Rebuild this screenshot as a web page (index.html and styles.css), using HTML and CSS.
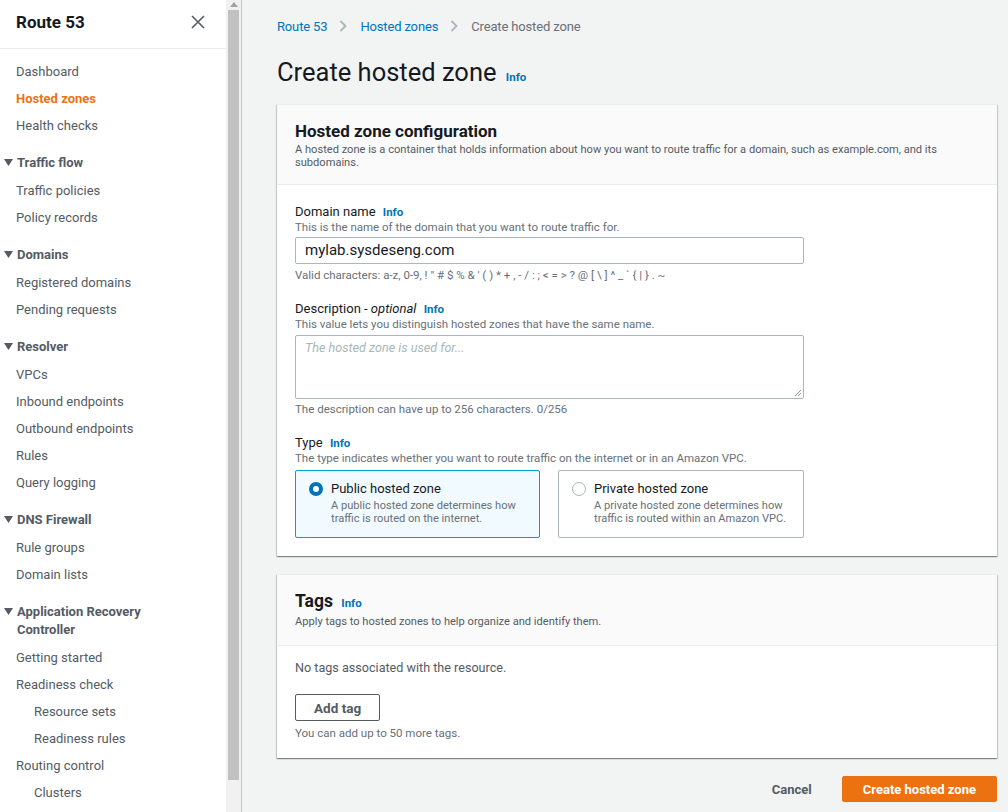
FILE: index.html
```html
<!DOCTYPE html>
<html lang="en">
<head>
<meta charset="utf-8">
<title>Create hosted zone</title>
<link rel="stylesheet" href="styles.css">
</head>
<body>
<div class="app">
  <aside class="sidebar">
    <div class="side-inner">
      <div class="side-head">
        <span class="side-title">Route 53</span>
        <svg class="close" width="14" height="14" viewBox="0 0 14 14"><path d="M1 1 L13 13 M13 1 L1 13" stroke="#545b64" stroke-width="1.6" fill="none"/></svg>
      </div>
      <nav class="nav">
        <ul class="nav-list">
          <li>Dashboard</li>
          <li class="active">Hosted zones</li>
          <li>Health checks</li>
        </ul>
        <div class="nav-section">
          <div class="section-head"><svg class="caret" width="9" height="7" viewBox="0 0 9 7"><path d="M0 0 H9 L4.5 7 Z" fill="#545b64"/></svg><span>Traffic flow</span></div>
          <ul class="nav-list">
            <li>Traffic policies</li>
            <li>Policy records</li>
          </ul>
        </div>
        <div class="nav-section">
          <div class="section-head"><svg class="caret" width="9" height="7" viewBox="0 0 9 7"><path d="M0 0 H9 L4.5 7 Z" fill="#545b64"/></svg><span>Domains</span></div>
          <ul class="nav-list">
            <li>Registered domains</li>
            <li>Pending requests</li>
          </ul>
        </div>
        <div class="nav-section">
          <div class="section-head"><svg class="caret" width="9" height="7" viewBox="0 0 9 7"><path d="M0 0 H9 L4.5 7 Z" fill="#545b64"/></svg><span>Resolver</span></div>
          <ul class="nav-list">
            <li>VPCs</li>
            <li>Inbound endpoints</li>
            <li>Outbound endpoints</li>
            <li>Rules</li>
            <li>Query logging</li>
          </ul>
        </div>
        <div class="nav-section">
          <div class="section-head"><svg class="caret" width="9" height="7" viewBox="0 0 9 7"><path d="M0 0 H9 L4.5 7 Z" fill="#545b64"/></svg><span>DNS Firewall</span></div>
          <ul class="nav-list">
            <li>Rule groups</li>
            <li>Domain lists</li>
          </ul>
        </div>
        <div class="nav-section">
          <div class="section-head"><svg class="caret" width="9" height="7" viewBox="0 0 9 7"><path d="M0 0 H9 L4.5 7 Z" fill="#545b64"/></svg><span>Application Recovery<br>Controller</span></div>
          <ul class="nav-list">
            <li>Getting started</li>
            <li>Readiness check</li>
            <li class="sub">Resource sets</li>
            <li class="sub">Readiness rules</li>
            <li>Routing control</li>
            <li class="sub">Clusters</li>
          </ul>
        </div>
      </nav>
    </div>
    <div class="scrollbar">
      <svg class="sb-arrow" width="8" height="5" viewBox="0 0 8 5"><path d="M0 5 L4 0 L8 5 Z" fill="#a3a3a3"/></svg>
      <div class="sb-thumb"></div>
    </div>
  </aside>

  <main class="main">
    <div class="breadcrumbs">
      <a class="crumb">Route 53</a>
      <svg class="chev" width="8" height="12" viewBox="0 0 8 12"><path d="M1.5 1 L6.5 6 L1.5 11" stroke="#aab7b8" stroke-width="1.8" fill="none"/></svg>
      <a class="crumb">Hosted zones</a>
      <svg class="chev" width="8" height="12" viewBox="0 0 8 12"><path d="M1.5 1 L6.5 6 L1.5 11" stroke="#aab7b8" stroke-width="1.8" fill="none"/></svg>
      <span class="crumb current">Create hosted zone</span>
    </div>

    <h1 class="page-title">Create hosted zone <a class="info">Info</a></h1>

    <section class="container">
      <div class="container-head">
        <h2 class="container-title">Hosted zone configuration</h2>
        <p class="container-desc">A hosted zone is a container that holds information about how you want to route traffic for a domain, such as example.com, and its subdomains.</p>
      </div>
      <div class="container-body">
        <div class="field">
          <div class="label">Domain name <a class="info">Info</a></div>
          <div class="hint">This is the name of the domain that you want to route traffic for.</div>
          <div class="input">mylab.sysdeseng.com</div>
          <div class="hint constraint first">Valid characters: a-z, 0-9, ! " # $ % &amp; ' ( ) * + , - / : ; &lt; = &gt; ? @ [ \ ] ^ _ ` { | } . ~</div>
        </div>

        <div class="field">
          <div class="label">Description - <i>optional</i> <a class="info">Info</a></div>
          <div class="hint">This value lets you distinguish hosted zones that have the same name.</div>
          <div class="textarea">
            <span class="placeholder">The hosted zone is used for...</span>
            <svg class="grip" width="8" height="8" viewBox="0 0 8 8"><path d="M7 1 L1 7 M7 4 L4 7" stroke="#879596" stroke-width="1" fill="none"/></svg>
          </div>
          <div class="hint constraint">The description can have up to 256 characters. 0/256</div>
        </div>

        <div class="field">
          <div class="label">Type <a class="info">Info</a></div>
          <div class="hint">The type indicates whether you want to route traffic on the internet or in an Amazon VPC.</div>
          <div class="tiles">
            <div class="tile selected">
              <span class="radio on"></span>
              <div class="tile-text">
                <div class="tile-title">Public hosted zone</div>
                <div class="tile-desc">A public hosted zone determines how traffic is routed on the internet.</div>
              </div>
            </div>
            <div class="tile">
              <span class="radio"></span>
              <div class="tile-text">
                <div class="tile-title">Private hosted zone</div>
                <div class="tile-desc">A private hosted zone determines how traffic is routed within an Amazon VPC.</div>
              </div>
            </div>
          </div>
        </div>
      </div>
    </section>

    <section class="container tags">
      <div class="container-head">
        <h2 class="container-title big">Tags <a class="info">Info</a></h2>
        <p class="container-desc">Apply tags to hosted zones to help organize and identify them.</p>
      </div>
      <div class="container-body">
        <p class="empty">No tags associated with the resource.</p>
        <button class="btn">Add tag</button>
        <div class="hint constraint">You can add up to 50 more tags.</div>
      </div>
    </section>

    <div class="actions">
      <button class="btn-link">Cancel</button>
      <button class="btn-primary">Create hosted zone</button>
    </div>
  </main>
</div>
</body>
</html>
```

FILE: styles.css
```css
* { box-sizing: border-box; }
html, body { margin: 0; padding: 0; }
body {
  font-family: Roboto, "Noto Sans", sans-serif;
  color: #16191f;
  background: #f2f3f3;
  width: 1008px;
  height: 812px;
  overflow: hidden;
}
ul { list-style: none; margin: 0; padding: 0; }
p, h1, h2 { margin: 0; }
a { cursor: pointer; }

.app { display: flex; height: 812px; }

/* Sidebar */
.sidebar {
  width: 242px;
  display: flex;
  background: #fff;
  border-right: 1px solid #c6c6c6;
  flex-shrink: 0;
}
.side-inner { width: 226px; overflow: hidden; }
.side-head {
  height: 49px;
  display: flex;
  align-items: center;
  justify-content: space-between;
  padding: 0 21px 4px 16px;
  border-bottom: 1px solid #eaeded;
}
.side-title { font-size: 17px; font-weight: 700; color: #16191f; }
.close { display: block; }

.nav { padding-top: 9px; }
.nav-list li {
  height: 27px;
  line-height: 27px;
  padding-left: 16px;
  font-size: 13px;
  color: #545b64;
  white-space: nowrap;
}
.nav-list li.active { color: #ec7211; font-weight: 700; }
.nav-list li.sub { padding-left: 34px; }
.nav-section { padding-top: 14.5px; }
.section-head {
  display: flex;
  align-items: flex-start;
  font-size: 13px;
  font-weight: 700;
  line-height: 18px;
  color: #545b64;
  margin-bottom: 5.5px;
}
.caret { margin: 5px 4px 0 4px; flex-shrink: 0; }

.scrollbar {
  width: 15px;
  background: #f1f1f1;
  display: flex;
  flex-direction: column;
  align-items: center;
}
.sb-arrow { margin-top: 2px; }
.sb-thumb {
  width: 11px;
  height: 770px;
  margin-top: 3px;
  background: #c1c1c1;
}

/* Main */
.main {
  flex: 1;
  padding: 16px 11px 0 35px;
  background: #f2f3f3;
}
.breadcrumbs {
  display: flex;
  align-items: center;
  height: 20px;
  font-size: 13px;
  letter-spacing: -0.15px;
}
.crumb { color: #0073bb; }
.crumb.current { color: #687078; }
.chev { margin: 0 13px 0 12px; }

.page-title {
  margin-top: 21px;
  height: 30px;
  line-height: 30px;
  font-size: 25.5px;
  font-weight: 400;
  color: #16191f;
}
.info {
  color: #0073bb;
  font-size: 11.5px;
  font-weight: 700;
  margin-left: 4px;
  line-height: 1;
  letter-spacing: 0;
}
.page-title .info { margin-left: 3px; }

.container {
  margin-top: 18px;
  background: #fff;
  border-top: 1px solid #eaeded;
  box-shadow: 0 1px 1px 0 rgba(0,28,36,.3), 1px 1px 1px 0 rgba(0,28,36,.15), -1px 1px 1px 0 rgba(0,28,36,.15);
}
.page-title + .container { margin-top: 17px; }
.container-head {
  background: #fafafa;
  border-bottom: 1px solid #eaeded;
  padding: 15px 20px 15px 18px;
}
.container-title {
  font-size: 17px;
  font-weight: 700;
  line-height: 22px;
  color: #16191f;
}
.container-title.big { font-size: 17.5px; line-height: 24px; }
.container-desc {
  font-size: 11.1px;
  line-height: 13px;
  color: #545b64;
  margin-top: 1px;
}
.container-body { padding: 18px 20px 18px 18px; }

.field { width: 509px; }
.field + .field { margin-top: 18px; }
.label {
  font-size: 13px;
  line-height: 18px;
  color: #16191f;
}
.hint {
  font-size: 11.5px;
  line-height: 13px;
  color: #687078;
}
.hint.constraint { margin-top: 4px; }
.hint.constraint.first { margin-top: 5px; }
.input {
  margin-top: 3px;
  height: 27px;
  border: 1px solid #aab7b8;
  border-radius: 2px;
  padding: 0 9px;
  line-height: 25px;
  font-size: 15px;
  color: #16191f;
}
.textarea {
  position: relative;
  margin-top: 4px;
  height: 64px;
  border: 1px solid #aab7b8;
  border-radius: 2px;
  padding: 3px 9px;
  font-size: 12.6px;
  line-height: 18px;
}
.placeholder { color: #aab7b8; font-style: italic; }
.grip { position: absolute; right: 1px; bottom: 1px; }

.tiles {
  margin-top: 5px;
  display: grid;
  grid-template-columns: 245px 246px;
  gap: 18px;
}
.tile {
  display: flex;
  align-items: flex-start;
  height: 68px;
  border: 1px solid #aab7b8;
  border-radius: 2px;
  padding: 9px 8px 0 13px;
}
.tile.selected { background: #f1faff; border-color: #00a1c9; }
.radio {
  width: 14px;
  height: 14px;
  border-radius: 50%;
  border: 1px solid #aab7b8;
  background: #fff;
  margin-top: 1.5px;
  margin-right: 8px;
  flex-shrink: 0;
}
.radio.on { border: 4px solid #0073bb; }
.tile-title { font-size: 13px; line-height: 18px; color: #16191f; }
.tile-desc { font-size: 11.1px; line-height: 13px; color: #687078; margin-top: 1px; }

.empty {
  font-size: 12.6px;
  line-height: 18px;
  color: #545b64;
}
.btn {
  margin-top: 17px;
  height: 27px;
  padding: 0 18px;
  background: #fff;
  border: 1px solid #545b64;
  border-radius: 2px;
  font-family: inherit;
  font-size: 13.5px;
  font-weight: 700;
  color: #545b64;
  display: block;
}
.tags .container-head { padding-top: 14px; padding-bottom: 17px; }
.tags .container-desc { margin-top: 2px; }
.tags .container-body { padding-top: 13px; }
.tags .hint.constraint { margin-top: 6px; }

.actions {
  margin-top: 18px;
  display: flex;
  justify-content: flex-end;
  gap: 9px;
}
.btn-link, .btn-primary {
  height: 26px;
  font-family: inherit;
  font-size: 13px;
  font-weight: 700;
  border-radius: 2px;
  padding: 0 20px;
  border: 1px solid transparent;
}
.btn-link { background: transparent; color: #545b64; }
.btn-primary { background: #ec7211; border-color: #ec7211; color: #fff; }
```
